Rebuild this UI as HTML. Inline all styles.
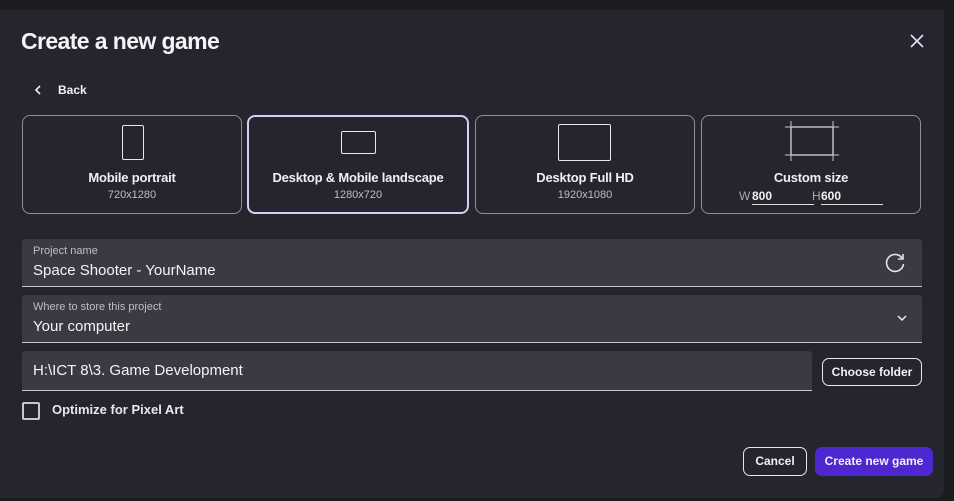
<!DOCTYPE html>
<html><head><meta charset="utf-8"><style>
*{box-sizing:border-box;margin:0;padding:0}
body{width:954px;height:501px;background:#1c1c20;font-family:"Liberation Sans",sans-serif;color:#f0f0f4;position:relative;overflow:hidden}
.dlg{position:absolute;left:0;top:10px;width:944px;height:488px;background:#25252d;border-radius:0 0 8px 0}
.abs{position:absolute}
h1{position:absolute;left:21px;top:28px;font-size:23px;font-weight:bold;letter-spacing:-0.6px;color:#f4f4f8}
.card{position:absolute;top:115px;height:99px;border:1px solid #8e8e96;border-radius:8px;text-align:center}
.card.sel{border:2px solid #d6cdf6}
.card .t{position:absolute;left:0;right:0;top:54px;font-size:13px;font-weight:bold;letter-spacing:-0.2px}
.card .s{position:absolute;left:0;right:0;top:73px;font-size:11px;color:#bdbdc4}
.ic{position:absolute;border:1px solid #e8e8ec;border-radius:2px}
.field{position:absolute;left:22px;background:#3a3a43;border-radius:4px 4px 0 0;border-bottom:1px solid #c8c8cc}
.lbl{position:absolute;left:11px;top:6px;font-size:11px;color:#bdbdc4}
.val{position:absolute;left:11px;font-size:15px;color:#f4f4f6}
.btn{position:absolute;border:1px solid #e8e8ec;border-radius:7px;font-size:12px;font-weight:bold;text-align:center;color:#f0f0f4}
</style></head><body>
<div class="dlg"></div>
<h1>Create a new game</h1>
<svg class="abs" style="left:910px;top:34px" width="14" height="14"><path d="M1 1L13 13M13 1L1 13" stroke="#e4def6" stroke-width="1.6"/></svg>
<svg class="abs" style="left:34px;top:85px" width="8" height="10"><path d="M6 1L2 5L6 9" stroke="#eee" stroke-width="1.6" fill="none"/></svg>
<div class="abs" style="left:58px;top:83px;font-size:12px;font-weight:bold">Back</div>

<div class="card" style="left:22px;width:220px"><div class="ic" style="left:99px;top:9px;width:22px;height:35px"></div><div class="t">Mobile portrait</div><div class="s">720x1280</div></div>
<div class="card sel" style="left:247px;width:222px"><div class="ic" style="left:92px;top:14px;width:35px;height:23px"></div><div class="t" style="top:53px">Desktop &amp; Mobile landscape</div><div class="s" style="top:72px">1280x720</div></div>
<div class="card" style="left:475px;width:220px"><div class="ic" style="left:82px;top:8px;width:53px;height:37px"></div><div class="t">Desktop Full HD</div><div class="s">1920x1080</div></div>
<div class="card" style="left:701px;width:220px">
<svg class="abs" style="left:83px;top:5px" width="54" height="40"><g stroke="#c8c8cc" stroke-width="1.4" fill="none"><rect x="6" y="6" width="42" height="28"/><path d="M0 6H54M0 34H54M6 0V40M48 0V40" stroke-width="1"/></g></svg>
<div class="t">Custom size</div>
<div class="abs" style="left:37px;top:73px;font-size:12px;color:#aaa">W</div>
<div class="abs" style="left:50px;top:73px;font-size:12px;font-weight:bold;width:62px;height:16px;border-bottom:1px solid #ddd;text-align:left">800</div>
<div class="abs" style="left:110px;top:73px;font-size:12px;color:#aaa">H</div>
<div class="abs" style="left:119px;top:73px;font-size:12px;font-weight:bold;width:62px;height:16px;border-bottom:1px solid #ddd;text-align:left">600</div>
</div>

<div class="field" style="top:239px;width:900px;height:48px"><div class="lbl">Project name</div><div class="val" style="top:23px">Space Shooter - YourName</div>
<svg class="abs" style="left:862px;top:13px" width="22" height="22"><path d="M18 6A8.5 8.5 0 1 0 19.5 12" stroke="#e4def6" stroke-width="1.6" fill="none"/><path d="M19 2V7H14" stroke="#e4def6" stroke-width="1.6" fill="none"/></svg></div>
<div class="field" style="top:295px;width:900px;height:48px"><div class="lbl">Where to store this project</div><div class="val" style="top:23px">Your computer</div>
<svg class="abs" style="left:875px;top:20px" width="10" height="7"><path d="M1 1L5 5L9 1" stroke="#eee" stroke-width="1.5" fill="none"/></svg></div>
<div class="field" style="top:351px;width:790px;height:40px"><div class="val" style="top:11px">H:\ICT 8\3. Game Development</div></div>
<div class="btn" style="left:822px;top:358px;width:100px;height:28px;line-height:26px">Choose folder</div>
<div class="abs" style="left:22px;top:402px;width:18px;height:18px;border:2px solid #c8c8cc;border-radius:2px"></div>
<div class="abs" style="left:52px;top:402px;font-size:13px;font-weight:bold;color:#e8e8ec">Optimize for Pixel Art</div>
<div class="btn" style="left:743px;top:447px;width:64px;height:29px;line-height:27px">Cancel</div>
<div class="btn" style="left:815px;top:447px;width:118px;height:29px;line-height:29px;border:none;background:#4d27cf">Create new game</div>
</body></html>
